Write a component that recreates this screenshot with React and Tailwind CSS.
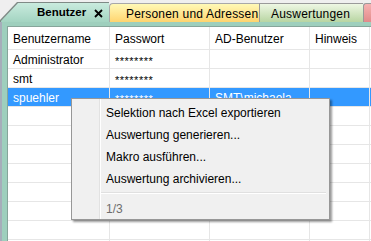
import React from "react";

const rows = [
  { a: "Administrator", b: "********", c: "", d: "" },
  { a: "smt", b: "********", c: "", d: "" },
  { a: "spuehler", b: "********", c: "SMT\\michaela", d: "", sel: true },
  {}, {}, {}, {}, {}, {}, {}, {},
];

function Cell({ w, children, last, sel }) {
  return (
    <div
      className={`${w} shrink-0 h-full flex items-center pl-[5px] pt-[2px] whitespace-nowrap overflow-hidden ${
        last ? "" : "border-r border-[#e6e6e6]"
      } ${sel ? "text-white" : "text-black"}`}
    >
      {children}
    </div>
  );
}

export default function App() {
  return (
    <div className="w-[371px] h-[241px] relative overflow-hidden bg-[#efefef] font-['Liberation_Sans',Arial,sans-serif] text-[12px] leading-none">
      {/* Tab strip */}
      <div className="h-[22px] flex items-end relative">
        {/* Benutzer */}
        <div className="relative z-10 w-[109px] h-[20px] shrink-0 bg-[#7f8a86] [clip-path:polygon(0_18px,17px_0,100%_0,100%_100%,0_100%)]">
          <div className="absolute inset-0 top-[1px] left-[1px] bg-gradient-to-b from-[#c9ebde] to-[#a3d4c1] [clip-path:polygon(0_18px,17px_0,100%_0,100%_100%,0_100%)] flex items-center pt-[1px]">
            <span className="ml-[36px] font-bold text-[11.5px] text-black whitespace-nowrap">Benutzer</span>
            <svg className="ml-[8px] shrink-0" width="9" height="9" viewBox="0 0 9 9">
              <path d="M1 1 L8 8 M8 1 L1 8" stroke="#000" strokeWidth="1.8" />
            </svg>
          </div>
        </div>
        {/* Personen und Adressen */}
        <div className="w-[150px] h-[19px] shrink-0 rounded-tl-[4px] border-t border-l border-[#a8a8a8] bg-gradient-to-b from-[#fff9b6] to-[#ffd46e] flex items-center pt-[1px] overflow-hidden">
          <span className="ml-[16px] text-black text-[12px] tracking-[0.2px] whitespace-nowrap">Personen und Adressen</span>
        </div>
        {/* Auswertungen */}
        <div className="w-[104px] h-[19px] shrink-0 border-t border-l border-[#9a9a9a] bg-gradient-to-b from-[#eef7e4] to-[#b8d5a2] flex items-center pt-[1px] overflow-hidden">
          <span className="ml-[11px] text-black text-[12px] tracking-[0.2px] whitespace-nowrap">Auswertungen</span>
        </div>
        {/* pink */}
        <div className="flex-1 h-[19px] rounded-tl-[3px] border-t border-l border-[#9a9a9a] bg-gradient-to-b from-[#f6b2b2] to-[#e28a8a]" />
      </div>

      {/* Body */}
      <div className="flex h-[219px]">
        <div className="w-[2px] shrink-0 bg-[#a6adba]" />
        <div className="flex-1 flex flex-col bg-[#9ecfbd]">
          <div className="h-[4px] shrink-0 bg-[#9ecfbd]" />
          <div className="flex-1 ml-[5px] border-t border-l border-[#86a59a] bg-white flex flex-col">
            {/* header */}
            <div className="h-[23px] shrink-0 flex border-b border-[#e6e6e6] text-[12px]">
              <Cell w="w-[102px]">Benutzername</Cell>
              <Cell w="w-[100px]">Passwort</Cell>
              <Cell w="w-[100px]">AD-Benutzer</Cell>
              <Cell w="w-[60px]">Hinweis</Cell>
              <div className="flex-1" />
            </div>
            {rows.map((r, i) => (
              <div
                key={i}
                className={`h-[19px] shrink-0 flex border-b border-[#e6e6e6] ${
                  r.sel ? "bg-[#3399ff]" : ""
                }`}
              >
                <Cell w="w-[102px]" sel={r.sel}>{r.a}</Cell>
                <Cell w="w-[100px]" sel={r.sel}>
                  <span className="text-[11px] tracking-[0.5px] pt-[3px]">{r.b}</span>
                </Cell>
                <Cell w="w-[100px]" sel={r.sel}>{r.c}</Cell>
                <Cell w="w-[60px]" sel={r.sel}>{r.d}</Cell>
                <div className="flex-1" />
              </div>
            ))}
          </div>
        </div>
      </div>

      {/* Context menu */}
      <div className="absolute left-[71px] top-[98px] w-[259px] h-[122px] bg-[#f0f0f0] border border-[#979797] shadow-[2px_2px_2px_rgba(0,0,0,0.4)] flex">
        <div className="w-[28px] shrink-0 border-r border-[#e2e2e2]" />
        <div className="w-[1px] shrink-0 bg-white" />
        <div className="flex-1 flex flex-col pt-[2px] pr-[3px]">
          {[
            "Selektion nach Excel exportieren",
            "Auswertung generieren...",
            "Makro ausführen...",
            "Auswertung archivieren...",
          ].map((t) => (
            <div key={t} className="h-[22px] flex items-center pl-[5px] pt-[2px] text-black">
              {t}
            </div>
          ))}
          <div className="h-[8px] flex flex-col justify-center">
            <div className="h-[1px] bg-[#e0e0e0]" />
            <div className="h-[1px] bg-white" />
          </div>
          <div className="h-[22px] flex items-center pl-[5px] pt-[2px] text-[#6d6d6d]">1/3</div>
        </div>
      </div>
    </div>
  );
}
